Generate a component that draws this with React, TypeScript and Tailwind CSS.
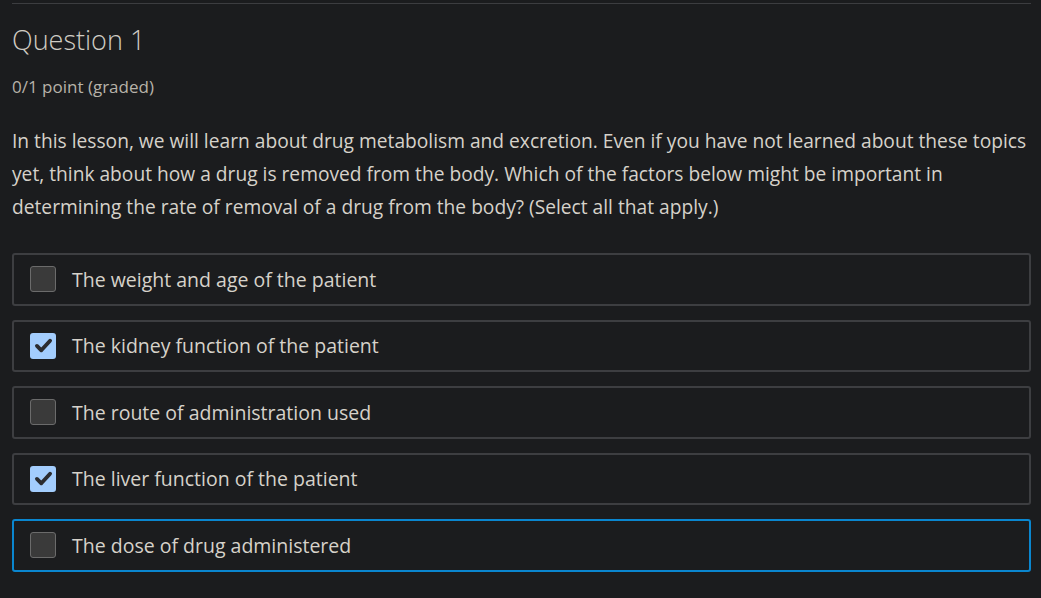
const options = [
  { label: 'The weight and age of the patient', checked: false },
  { label: 'The kidney function of the patient', checked: true },
  { label: 'The route of administration used', checked: false },
  { label: 'The liver function of the patient', checked: true },
  { label: 'The dose of drug administered', checked: false, focused: true },
];

function CheckBox({ checked }: { checked: boolean }) {
  if (checked) {
    return (
      <span className="flex h-[26px] w-[26px] items-center justify-center rounded-[3px] bg-[#a3cdfd]">
        <svg viewBox="0 0 24 24" className="h-[21px] w-[21px]">
          <path d="M4.5 12.5 L9.5 17.5 L19.5 6.5" fill="none" stroke="#2b2c30" strokeWidth="4.4" strokeLinecap="round" strokeLinejoin="round" />
        </svg>
      </span>
    );
  }
  return <span className="block h-[26px] w-[26px] rounded-[3px] border-[1.5px] border-[#6b6b6b] bg-[#3a3a3a]" />;
}

export default function App() {
  return (
    <div className="min-h-[598px] w-[1041px] bg-[#1b1c1e] px-3 pt-[3px] text-[#d6d2ca]" style={{ fontFamily: '"Open Sans", Lato, sans-serif' }}>
      <div className="h-px w-[1019px] bg-[#3c3d40]" />
      <h2 className="mt-[19px] text-[27px] font-light leading-[34px] text-[#d0ccc4]">Question 1</h2>
      <div className="mt-[18px] text-[17px] leading-[24px] text-[#b7b2a9]">0/1 point (graded)</div>
      <p className="mt-[25px] w-[1019px] text-[19.2px] leading-[33px]">
        In this lesson, we will learn about drug metabolism and excretion. Even if you have not learned about these topics yet, think about how a drug is removed from the body. Which of the factors below might be important in determining the rate of removal of a drug from the body? (Select all that apply.)
      </p>
      <div className="mt-[30px] flex w-[1019px] flex-col gap-[14px]">
        {options.map((opt, i) => (
          <label
            key={i}
            className={`flex h-[52.5px] items-center gap-[16px] rounded-[3px] border-2 pl-[16px] ${opt.focused ? 'border-[#0a86cf]' : 'border-[#3d3e41]'}`}
          >
            <CheckBox checked={opt.checked} />
            <span className="text-[19.5px] text-[#d6d2ca]">{opt.label}</span>
          </label>
        ))}
      </div>
    </div>
  );
}
